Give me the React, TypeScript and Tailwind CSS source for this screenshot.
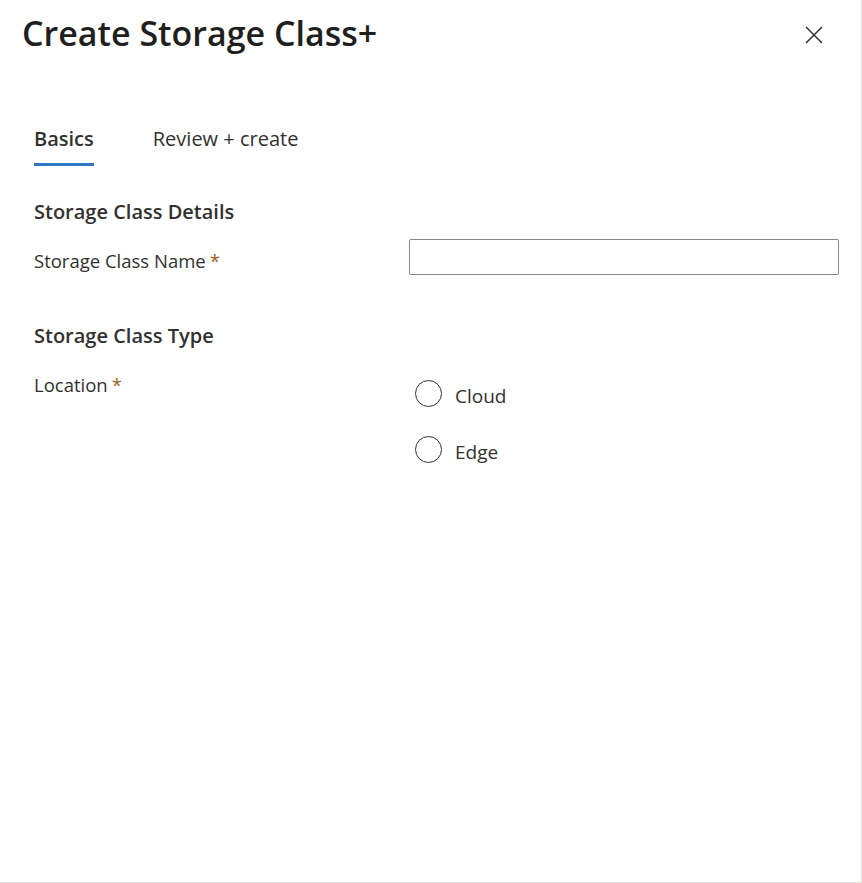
const font = { fontFamily: '"Open Sans", "Noto Sans", sans-serif' };

function RequiredMark() {
  return <span className="ml-[4px] text-[#9c5f2b]">*</span>;
}

function Radio({ label }: { label: string }) {
  return (
    <label className="flex items-start gap-[13px] cursor-pointer">
      <span className="w-[27px] h-[27px] rounded-full border border-[#323130] bg-white shrink-0" />
      <span className="mt-[3px] text-[19px] leading-[26px] text-[#323130]">{label}</span>
    </label>
  );
}

export default function App() {
  return (
    <div className="w-[862px] h-[883px] bg-white" style={font}>
      <div className="w-[862px] h-[883px] border-r border-b border-[#e1dfdd] flex flex-col">
        <div className="flex items-start justify-between pt-[13px] pl-[22px] pr-[38px]">
          <h1 className="text-[34px] leading-[40px] font-semibold text-[#201f1e]">Create Storage Class+</h1>
          <button className="mt-[13px] w-[18px] h-[18px] text-[#323130]">
            <svg width="18" height="18" viewBox="0 0 18 18" fill="none" stroke="currentColor" strokeWidth="1.5">
              <path d="M1 1L17 17M17 1L1 17" />
            </svg>
          </button>
        </div>

        <div className="flex gap-[59px] pl-[34px] mt-[72px]">
          <div className="pb-[10px] border-b-[3px] border-[#2f78c6] text-[20px] leading-[28px] font-semibold text-[#323130]">
            Basics
          </div>
          <div className="pb-[10px] border-b-[3px] border-transparent text-[20px] leading-[28px] text-[#323130]">
            Review + create
          </div>
        </div>

        <div className="pl-[34px] pr-[22px]">
          <h2 className="mt-[32px] text-[20px] leading-[28px] font-semibold text-[#323130]">Storage Class Details</h2>

          <div className="mt-[13px] grid grid-cols-[375px_1fr] items-start">
            <div className="mt-[9px] text-[18.5px] leading-[26px] text-[#323130]">
              Storage Class Name<RequiredMark />
            </div>
            <input className="h-[36px] w-full rounded-[2px] border border-[#8a8886] bg-white px-2 outline-none" />
          </div>

          <h2 className="mt-[47px] text-[20px] leading-[28px] font-semibold text-[#323130]">Storage Class Type</h2>

          <div className="mt-[22px] grid grid-cols-[375px_1fr] items-start">
            <div className="text-[18.5px] leading-[26px] text-[#323130]">
              Location<RequiredMark />
            </div>
            <div className="mt-[8px] pl-[6px] flex flex-col gap-[27px]">
              <Radio label="Cloud" />
              <Radio label="Edge" />
            </div>
          </div>
        </div>
      </div>
    </div>
  );
}
